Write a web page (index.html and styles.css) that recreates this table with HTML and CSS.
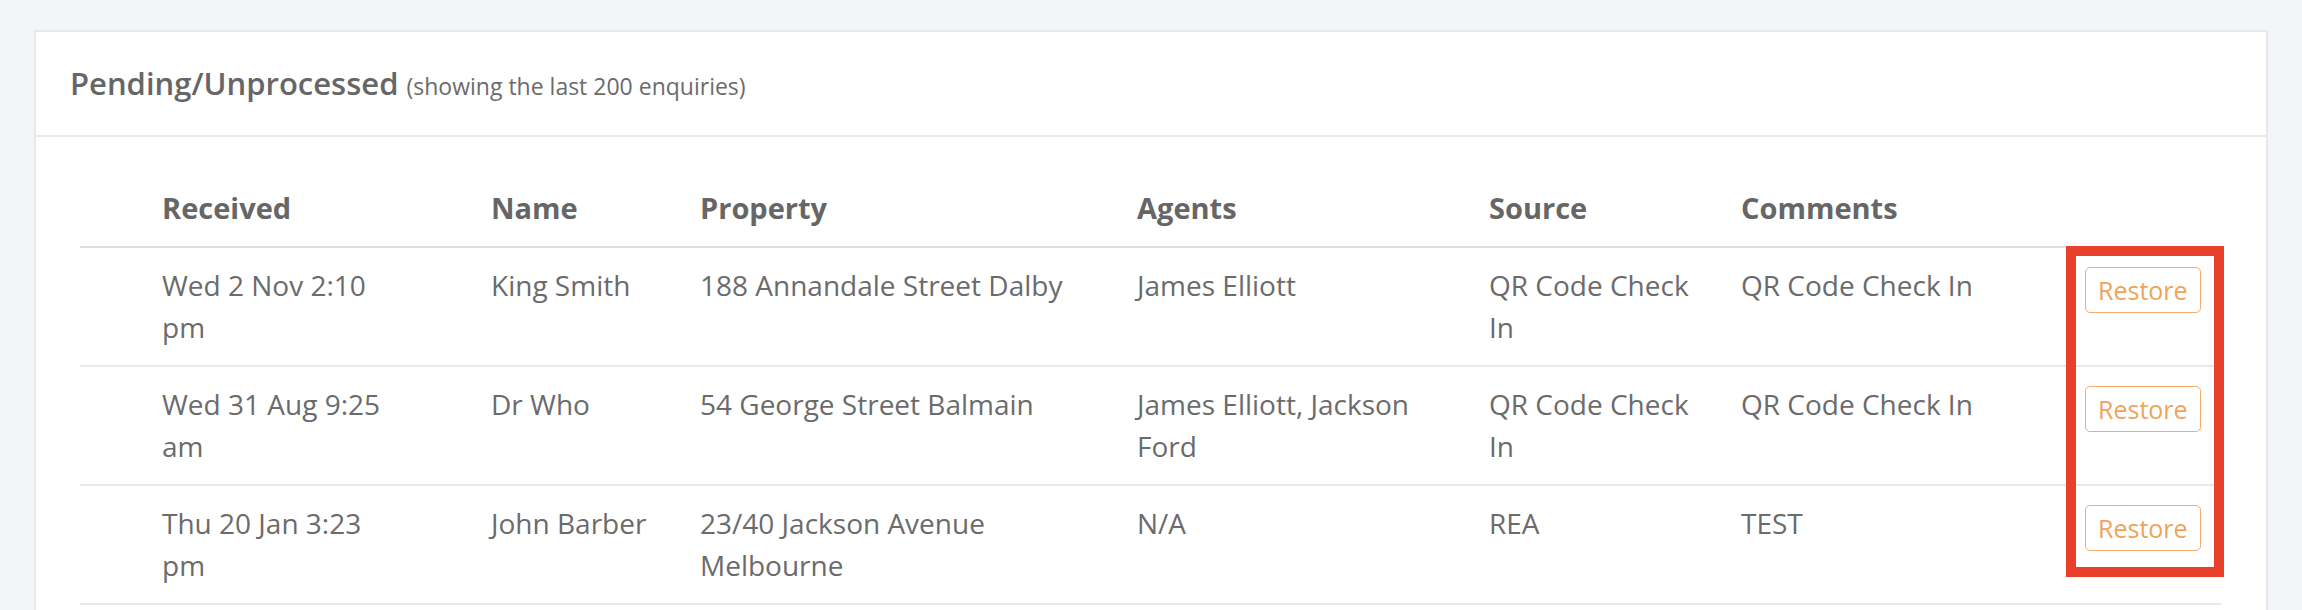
FILE: index.html
```html
<!DOCTYPE html>
<html lang="en">
<head>
  <meta charset="UTF-8" />
  <meta name="viewport" content="width=device-width, initial-scale=1.0"/>
  <title>Enquiries</title>
  <link rel="stylesheet" href="styles.css">
</head>
<body>
  <div class="card">
    <div class="card-header">
      <h3>Pending/Unprocessed <small>(showing the last 200 enquiries)</small></h3>
    </div>
    <div class="card-body">
      <div class="table-wrap">
        <table class="enquiries">
          <thead>
            <tr>
              <th class="col-blank"></th>
              <th class="col-received">Received</th>
              <th class="col-name">Name</th>
              <th class="col-property">Property</th>
              <th class="col-agents">Agents</th>
              <th class="col-source">Source</th>
              <th class="col-comments">Comments</th>
              <th class="col-action"></th>
            </tr>
          </thead>
          <tbody>
            <tr>
              <td class="col-blank"></td>
              <td class="col-received">Wed 2 Nov 2:10 pm</td>
              <td class="col-name">King Smith</td>
              <td class="col-property">188 Annandale Street Dalby</td>
              <td class="col-agents">James Elliott</td>
              <td class="col-source">QR Code Check In</td>
              <td class="col-comments">QR Code Check In</td>
              <td class="col-action"><button class="btn-restore" type="button">Restore</button></td>
            </tr>
            <tr>
              <td class="col-blank"></td>
              <td class="col-received">Wed 31 Aug 9:25 am</td>
              <td class="col-name">Dr Who</td>
              <td class="col-property">54 George Street Balmain</td>
              <td class="col-agents">James Elliott, Jackson Ford</td>
              <td class="col-source">QR Code Check In</td>
              <td class="col-comments">QR Code Check In</td>
              <td class="col-action"><button class="btn-restore" type="button">Restore</button></td>
            </tr>
            <tr>
              <td class="col-blank"></td>
              <td class="col-received">Thu 20 Jan 3:23 pm</td>
              <td class="col-name">John Barber</td>
              <td class="col-property">23/40 Jackson Avenue Melbourne</td>
              <td class="col-agents">N/A</td>
              <td class="col-source">REA</td>
              <td class="col-comments">TEST</td>
              <td class="col-action"><button class="btn-restore" type="button">Restore</button></td>
            </tr>
          </tbody>
        </table>
        <!-- highlight box drawn over the restore column -->
        <div class="highlight"></div>
      </div>
    </div>
  </div>
</body>
</html>
```

FILE: styles.css
```css
body {
  font-family: 'Open Sans', 'Liberation Sans', sans-serif;
  margin: 0;
  padding: 30px 34px 0;
  background-color: #f4f5f9;
  color: #6b6b6b;
  font-size: 28px;
  line-height: 42px;
}
.card {
  background: #fff;
  border: 2px solid #e7e8eb;
}
.card-header {
  padding: 30px 34px 31px;
  border-bottom: 2px solid #e9e9e9;
}
.card-header h3 {
  margin: 0;
  font-size: 31px;
  font-weight: 600;
  color: #666;
  line-height: 42px;
}
.card-header small {
  font-size: 23px;
  font-weight: 400;
  line-height: 1;
  color: #6b6b6b;
}
.card-body {
  padding: 34px 44px 44px;
}
.table-wrap {
  position: relative;
}
.enquiries {
  width: 100%;
  table-layout: fixed;
  border-collapse: collapse;
}
.enquiries th,
.enquiries td {
  box-sizing: border-box;
  text-align: left;
  vertical-align: top;
  padding: 16px 24px 17px;
}
.enquiries th {
  font-size: 29px;
  font-weight: 700;
  color: #666;
  border-bottom: 2px solid #dedede;
}
.enquiries td {
  border-bottom: 2px solid #e9e9e9;
}
.col-blank {
  width: 58px;
}
.enquiries .col-blank {
  padding: 0;
}
.col-received {
  width: 329px;
}
.enquiries .col-received {
  padding-right: 66px;
}
.col-name {
  width: 209px;
}
.enquiries .col-name {
  padding-right: 16px;
}
.col-property {
  width: 437px;
}
.col-agents {
  width: 352px;
}
.col-source {
  width: 252px;
}
.enquiries .col-source {
  padding-right: 14px;
}
.col-comments {
  width: 344px;
}
.col-action {
  width: 161px;
}
.enquiries .col-action {
  padding-right: 18px;
}
.btn-restore {
  display: block;
  margin-top: 3px;
  padding: 4px 12px;
  font-family: inherit;
  font-size: 25px;
  line-height: 36px;
  color: #f0a35a;
  background: #fff;
  border: 1px solid #f2ad6a;
  border-radius: 5px;
  cursor: pointer;
}
.highlight {
  position: absolute;
  left: 1986px;
  top: 75px;
  width: 158px;
  height: 331px;
  box-sizing: border-box;
  border: 10px solid #e8402a;
}
```
